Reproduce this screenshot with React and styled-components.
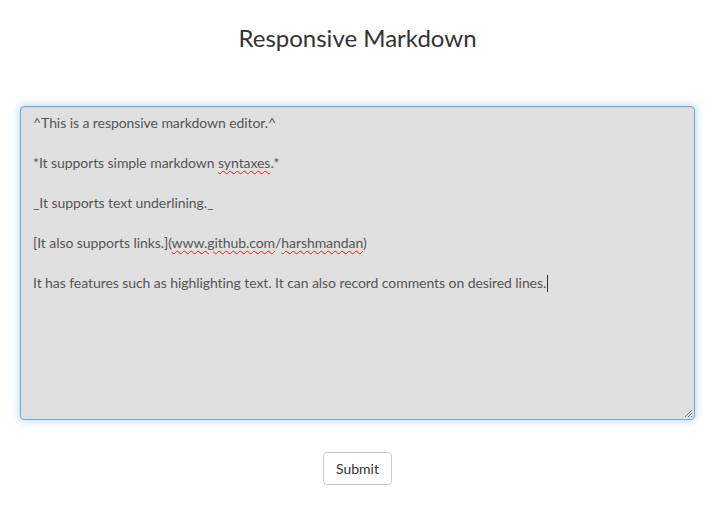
import React from "react";
import styled, { createGlobalStyle } from "styled-components";

const Global = createGlobalStyle`
  html, body {
    margin: 0;
    background: #fff;
    font-family: Lato, "Open Sans", sans-serif;
    color: #333;
  }
`;

const Page = styled.div`
  box-sizing: border-box;
  width: 715px;
  display: flex;
  flex-direction: column;
  align-items: center;
  padding: 0 20px;
`;

const Title = styled.h3`
  margin: 25px 0 55px;
  font-size: 24px;
  font-weight: 400;
  line-height: 26px;
  color: #333;
`;

const Editor = styled.div`
  position: relative;
  box-sizing: border-box;
  width: 100%;
  height: 314px;
  padding: 6px 12px;
  background: #e0e0e0;
  border: 1px solid #66afe9;
  border-radius: 4px;
  box-shadow: inset 0 1px 1px rgba(0, 0, 0, 0.075), 0 0 8px rgba(102, 175, 233, 0.6);
  font-size: 14px;
  letter-spacing: -0.07px;
  line-height: 20px;
  color: #555;
  white-space: pre-wrap;
`;

const Line = styled.div`
  min-height: 20px;
`;

const Typo = styled.span`
  text-decoration: underline wavy #e02020;
  text-decoration-thickness: 1px;
  text-underline-offset: 2px;
`;

const Caret = styled.span`
  display: inline-block;
  width: 1px;
  height: 17px;
  margin-left: 1px;
  vertical-align: -4px;
  background: #333;
`;

const Grip = styled.svg`
  position: absolute;
  right: 1px;
  bottom: 1px;
`;

const Button = styled.button`
  margin-top: 32px;
  padding: 6px 12px;
  background: #fff;
  border: 1px solid #ccc;
  border-radius: 4px;
  font-family: Lato, "Open Sans", sans-serif;
  font-size: 14px;
  line-height: 19px;
  color: #333;
  cursor: pointer;
`;

export default function App() {
  return (
    <>
      <Global />
      <Page>
        <Title>Responsive Markdown</Title>
        <Editor>
          <Line>^This is a responsive markdown editor.^</Line>
          <Line />
          <Line>
            *It supports simple markdown <Typo>syntaxes</Typo>.*
          </Line>
          <Line />
          <Line>_It supports text underlining._</Line>
          <Line />
          <Line>
            [It also supports links.](<Typo>www.github.com</Typo>/<Typo>harshmandan</Typo>)
          </Line>
          <Line />
          <Line>
            It has features such as highlighting text. It can also record comments on desired lines.
            <Caret />
          </Line>
          <Grip width="10" height="10" viewBox="0 0 10 10">
            <path d="M9 2 L2 9 M9 5 L5 9 M9 8 L8 9" stroke="#777" strokeWidth="1" />
          </Grip>
        </Editor>
        <Button>Submit</Button>
      </Page>
    </>
  );
}
